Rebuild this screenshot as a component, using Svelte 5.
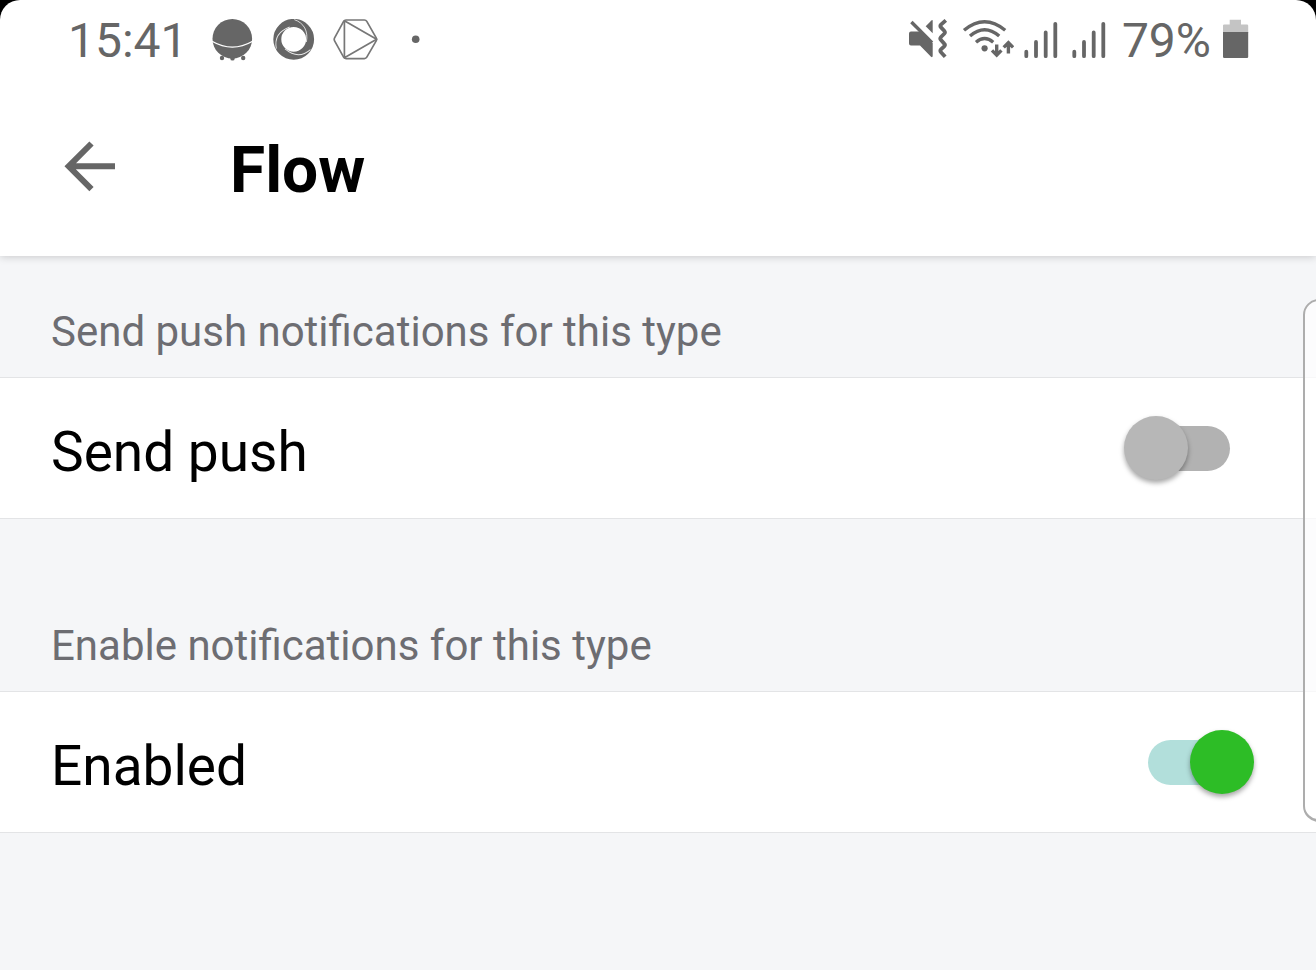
<script>
  let time = "15:41";
  let battery = 79;

  let sections = [
    { id: "push", description: "Send push notifications for this type", label: "Send push", on: false },
    { id: "enabled", description: "Enable notifications for this type", label: "Enabled", on: true }
  ];
</script>

<div class="screen">
  <div class="top">
    <div class="status-bar">
      <div class="status-left">
        <span class="time">{time}</span>
        <svg width="44" height="44" viewBox="0 0 44 44" aria-hidden="true">
          <circle cx="21.3" cy="19.8" r="19.8" fill="#666" />
          <path d="M1 22.3Q21.3 34 41.6 22.3" fill="none" stroke="#fff" stroke-width="1.3" />
          <circle cx="11" cy="39" r="2.2" fill="#666" />
          <circle cx="21.5" cy="39.4" r="2.2" fill="#666" />
          <circle cx="32.2" cy="39" r="2.2" fill="#666" />
        </svg>
        <svg width="46" height="44" viewBox="0 0 46 44" aria-hidden="true">
          <circle cx="22.7" cy="20.3" r="16.4" fill="none" stroke="#666" stroke-width="8" />
          <g fill="none" stroke="#fff" stroke-width="0.9" stroke-opacity="0.85">
            <path d="M23.3 .6C33 4 37.4 12 35.4 23" />
            <path d="M23.3 .6C33 4 37.4 12 35.4 23" transform="rotate(120 22.7 20.3)" />
            <path d="M23.3 .6C33 4 37.4 12 35.4 23" transform="rotate(240 22.7 20.3)" />
          </g>
        </svg>
        <svg width="48" height="44" viewBox="0 0 48 44" aria-hidden="true">
          <g fill="none" stroke="#777" stroke-width="1.7" stroke-linejoin="round">
            <path d="M13 1H31.4Q33 1 33.8 2.4L43.2 18.8Q44 20.3 43.2 21.8L33.8 38.2Q33 39.6 31.4 39.6H13Q11.4 39.6 10.6 38.2L1.6 21.8Q.8 20.3 1.6 18.8L10.6 2.4Q11.4 1 13 1Z" />
            <path d="M11.4 1.8L43.6 20.3L11.4 38.8Z" />
          </g>
        </svg>
        <svg width="40" height="44" viewBox="0 0 40 44" aria-hidden="true">
          <circle cx="18.7" cy="20.3" r="3.8" fill="#666" />
        </svg>
      </div>

      <div class="status-right">
        <svg width="48" height="44" viewBox="0 0 48 44" aria-hidden="true">
          <path d="M5 12.4H14.6L26.7 24V36.6Q26.7 39 25 37.8L14 26.5H5Q3 26.5 3 24.5V14.4Q3 12.4 5 12.4Z" fill="#666" />
          <path d="M26.7 1.8V14.3L19.7 7.3L25.4 1.4Q26.7 .4 26.7 1.8Z" fill="#666" />
          <path d="M5.4 3L26 23.6" fill="none" stroke="#666" stroke-width="3.4" />
          <path d="M39.8 1.4L35 5.6Q33.6 7 35 8.4L38.2 11.8Q39.6 13.3 38.2 14.8L35 18Q33.6 19.5 35 21L38.2 24.6Q39.6 26 38.2 27.4L35 30.4Q33.6 31.8 35 33.2L39.2 37.7" fill="none" stroke="#666" stroke-width="3.8" />
        </svg>
        <svg width="52" height="44" viewBox="0 0 52 44" aria-hidden="true">
          <g fill="none" stroke="#666" stroke-width="3.4">
            <path d="M2 11.2Q22.6 -5.8 43.2 11.2" />
            <path d="M8 17Q22.6 4.4 37.2 17" />
            <path d="M14 23.2Q22.6 16 31.2 23.2" />
            <path d="M34.7 25.5V36M30 31.4L34.7 36.1L39.4 31.4" />
            <path d="M46.4 34.5V24M41.7 28.4L46.4 23.7L51.1 28.4" />
          </g>
          <circle cx="22.6" cy="29.3" r="3.1" fill="#666" />
        </svg>
        {#each [1, 2] as sim}
          <svg width="40" height="44" viewBox="0 0 40 44" role="img" aria-label="SIM {sim}">
            <path d="M4.3 32.7V37.2M14 23V37.2M23.7 13.4V37.2M33.3 4.8V37.2" stroke="#666" stroke-width="3.8" stroke-linecap="round" />
          </svg>
        {/each}
        <span class="battery">{battery}%</span>
        <svg width="30" height="44" viewBox="0 0 30 44" aria-hidden="true">
          <path d="M10.7 .7H22V5.4H28Q29.2 5.4 29.2 6.6V14H4V6.6Q4 5.4 5.2 5.4H10.7Z" fill="#c4c4c4" />
          <path d="M4 13H29.2V37.8Q29.2 39 28 39H5.2Q4 39 4 37.8Z" fill="#666" />
        </svg>
      </div>
    </div>

    <header class="header">
      <button class="back" aria-label="Back">
        <svg width="56" height="56" viewBox="0 0 56 56">
          <path d="M29.5 5.5L6.7 28.3L29.5 51.1M6.7 28.3H53" fill="none" stroke="#666" stroke-width="6" />
        </svg>
      </button>
      <h1>Flow</h1>
    </header>
  </div>

  <main>
    {#each sections as section}
      <section>
        <p class="description" id="{section.id}-description">{section.description}</p>
        <div class="row">
          <label for={section.id}>{section.label}</label>
          <input
            type="checkbox"
            class="switch"
            id={section.id}
            aria-describedby="{section.id}-description"
            bind:checked={section.on}
          />
        </div>
      </section>
    {/each}
  </main>

  <!-- edge panel handle -->
  <div class="edge-panel"></div>
</div>

<style>
  :global(body) {
    margin: 0;
    background: #f5f6f8;
  }

  .screen {
    position: relative;
    overflow: hidden;
    font-family: Roboto, sans-serif;
    color: #000;
  }

  .top {
    position: relative;
    background: #000;
    box-shadow: 0 1px 8px rgba(0, 0, 0, 0.18);
  }

  .status-bar {
    display: flex;
    justify-content: space-between;
    padding: 19px 67px 17px 68px;
    background: #fff;
    border-radius: 20px 20px 0 0;
    color: #666;
    font-size: 48px;
    line-height: 44px;
  }

  .status-left,
  .status-right {
    display: flex;
    align-items: flex-start;
  }

  .status-left {
    gap: 16px;
  }

  .status-right {
    gap: 8px;
  }

  .time {
    margin-right: 7px;
  }

  .battery {
    margin-left: 4px;
  }

  .header {
    display: flex;
    align-items: flex-start;
    padding: 50px 62px 44px;
    background: #fff;
  }

  .back {
    display: flex;
    align-items: center;
    height: 72px;
    margin-right: 112px;
    padding: 0;
    border: none;
    background: none;
    cursor: pointer;
  }

  h1 {
    margin: 0;
    font-size: 64px;
    font-weight: 700;
    line-height: 82px;
  }

  .description {
    margin: 0;
    padding: 52px 51px 21px;
    color: #6d6d72;
    font-size: 42px;
    line-height: 48px;
  }

  section + section .description {
    padding-top: 103px;
  }

  .row {
    display: flex;
    align-items: center;
    justify-content: space-between;
    height: 140px;
    padding: 0 62px 0 51px;
    background: #fff;
    border-top: 1px solid #e3e4e6;
    border-bottom: 1px solid #e3e4e6;
  }

  .row label {
    padding-top: 8px;
    font-size: 55px;
    line-height: 72px;
  }

  .switch {
    appearance: none;
    display: grid;
    align-items: center;
    width: 130px;
    height: 64px;
    margin: 0;
    cursor: pointer;
  }

  .switch::before,
  .switch::after {
    content: "";
    grid-area: 1 / 1;
  }

  .switch::before {
    justify-self: center;
    width: 82px;
    height: 45px;
    border-radius: 23px;
    background: #b2b2b2;
  }

  .switch::after {
    justify-self: start;
    width: 64px;
    height: 64px;
    border-radius: 50%;
    background: #b7b7b7;
    box-shadow: 0 3px 5px rgba(0, 0, 0, 0.35);
  }

  .switch:checked::before {
    background: #b2dfdb;
  }

  .switch:checked::after {
    justify-self: end;
    background: #2dbd26;
  }

  .edge-panel {
    position: absolute;
    top: 299px;
    right: -20px;
    width: 29px;
    height: 518px;
    border: 2px solid #adadad;
    border-bottom-width: 3px;
    border-radius: 16px;
    background: rgba(255, 255, 255, 0.7);
  }
</style>
